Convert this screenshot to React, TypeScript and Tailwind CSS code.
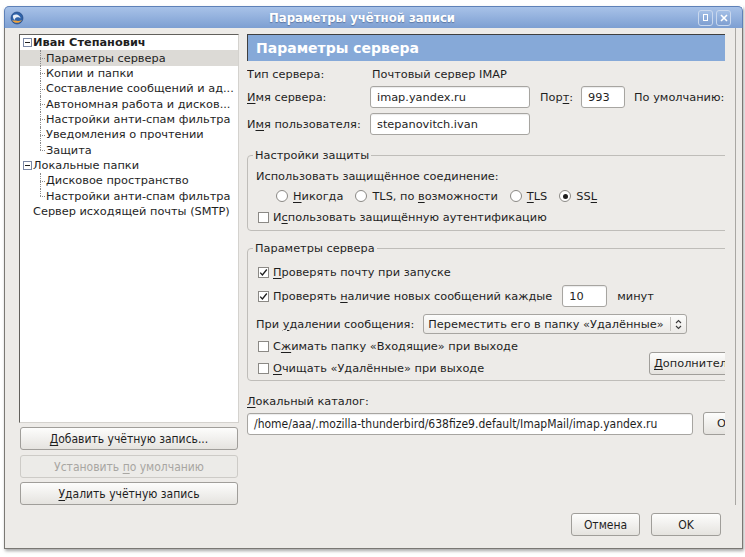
import React from "react";

const U: React.FC<{ children: React.ReactNode }> = ({ children }) => (
  <span className="underline decoration-1 underline-offset-[2px]">{children}</span>
);

const CheckBox: React.FC<{ checked?: boolean }> = ({ checked }) => (
  <span className="flex h-[11px] w-[11px] shrink-0 items-center justify-center border border-[#8b8985] bg-white">
    {checked && (
      <svg width="9" height="9" viewBox="0 0 9 9">
        <path d="M1.2 4.6 3.4 7 7.8 1.5" fill="none" stroke="#1e1e1e" strokeWidth="1.3" />
      </svg>
    )}
  </span>
);

const Radio: React.FC<{ checked?: boolean }> = ({ checked }) => (
  <span className="flex h-[12px] w-[12px] shrink-0 items-center justify-center rounded-full border border-[#8b8985] bg-white">
    {checked && <span className="h-[5px] w-[5px] rounded-full bg-[#1e1e1e]" />}
  </span>
);

const Field: React.FC<{ children: React.ReactNode; className?: string }> = ({ children, className }) => (
  <div
    className={`flex h-[22px] shrink-0 items-center whitespace-nowrap rounded-[3px] border border-[#a7a5a1] bg-white pl-[6px] shadow-[inset_0_1px_1px_rgba(0,0,0,0.08)] ${className ?? ""}`}
  >
    <span>{children}</span>
  </div>
);

const Button: React.FC<{ children: React.ReactNode; className?: string; disabled?: boolean }> = ({
  children,
  className,
  disabled,
}) => (
  <div
    className={`flex shrink-0 items-center justify-center whitespace-nowrap rounded-[3px] border ${
      disabled
        ? "border-[#cdcbc7] bg-[#ecebe8] text-[#a8a6a2]"
        : "border-[#a09e9a] bg-linear-to-b from-[#fdfdfc] to-[#e5e3df] text-[#1e1e1e]"
    } ${className ?? ""}`}
  >
    <span>{children}</span>
  </div>
);

const Expander = () => (
  <span className="flex h-[9px] w-[9px] shrink-0 items-center justify-center border border-[#7b88a6] bg-white">
    <span className="h-px w-[5px] bg-[#1e1e1e]" />
  </span>
);

const TreeParent: React.FC<{ label: string; bold?: boolean; leaf?: boolean }> = ({ label, bold, leaf }) => (
  <div className="flex h-[15.36px] items-center pl-[3px]">
    {leaf ? <span className="w-[9px]" /> : <Expander />}
    <span className={`ml-[1px] whitespace-nowrap ${bold ? "font-bold" : ""}`}>{label}</span>
  </div>
);

const TreeChild: React.FC<{ label: string; selected?: boolean; last?: boolean }> = ({ label, selected, last }) => (
  <div className={`relative flex h-[15.36px] items-center pl-[26px] ${selected ? "bg-[#dcdad6]" : ""}`}>
    <span
      className={`absolute left-[20px] top-0 border-l border-dotted border-[#8a8a8a] ${last ? "h-1/2" : "h-full"}`}
    />
    <span className="absolute left-[20px] top-1/2 w-[5px] border-t border-dotted border-[#8a8a8a]" />
    <span className="whitespace-nowrap">{label}</span>
  </div>
);

const ThunderbirdIcon = () => (
  <svg width="14" height="14" viewBox="0 0 14 14">
    <circle cx="7" cy="7" r="6" fill="#2f62a8" stroke="#1d3f7a" strokeWidth="0.6" />
    <path
      d="M3 4.5c1.5-1 3.5-1.2 5-.5 1.5.7 2.5 2 2.6 3.6-.8-1-2-1.5-3.2-1.3C5.8 6.5 4.6 7.7 4.5 9.3 3.5 8 2.6 6 3 4.5z"
      fill="#e8eef7"
    />
    <path
      d="M2 9.5c1.5 1.7 4 2.7 6.4 2.2 1.6-.4 2.8-1.4 3.4-2.7-1.4.9-3.2 1.2-4.9.8-1.8-.4-3.5-.5-4.9-.3z"
      fill="#f2a33a"
    />
  </svg>
);

const TitleButton: React.FC<{ children: React.ReactNode }> = ({ children }) => (
  <div className="flex h-[16px] w-[15px] items-center justify-center rounded-[3px] border border-[#c9d8ee] bg-linear-to-b from-[#a3bfe6] to-[#7f9fd1]">
    {children}
  </div>
);

export default function App() {
  return (
    <div className="h-[557px] w-[745px] overflow-hidden bg-white pl-[4px] pt-[6px] font-['DejaVu_Sans','Liberation_Sans',sans-serif] text-[11.33px] text-[#1e1e1e]">
      <div className="flex h-[543px] w-[739px] flex-col shadow-[1px_2px_3px_rgba(0,0,0,0.35)]">
        {/* title bar */}
        <div className="flex h-[22px] shrink-0 items-center rounded-t-[5px] border border-b-0 border-[#5e81b8] bg-linear-to-b from-[#a8c2e8] to-[#7d9fd2]">
          <div className="flex w-[21px] justify-center pl-[3px]">
            <ThunderbirdIcon />
          </div>
          <div className="flex-1 text-center font-['DejaVu_Sans_Condensed','DejaVu_Sans',sans-serif] text-[13px] font-bold text-white font-stretch-condensed [text-shadow:0_1px_1px_rgba(40,60,100,0.45)]">
            Параметры учётной записи
          </div>
          <div className="flex gap-[3px] pr-[11px]">
            <TitleButton>
              <span className="h-[7px] w-[5px] border border-white" />
            </TitleButton>
            <TitleButton>
              <svg width="8" height="8" viewBox="0 0 8 8">
                <path d="M1 1 7 7M7 1 1 7" stroke="#fff" strokeWidth="1.6" />
              </svg>
            </TitleButton>
          </div>
        </div>

        {/* body */}
        <div className="flex flex-1 flex-col border border-t-0 border-[#7a7874] bg-[#edebe8] pl-[14px] pt-[6px]">
          <div className="flex h-[471px]">
            {/* left column */}
            <div className="flex w-[220px] shrink-0 flex-col">
              <div className="h-[389px] border border-b-[#d4d2ce] border-l-[#62605c] border-r-[#d4d2ce] border-t-[#62605c] bg-white">
                <TreeParent label="Иван Степанович" bold />
                <TreeChild label="Параметры сервера" selected />
                <TreeChild label="Копии и папки" />
                <TreeChild label="Составление сообщений и ад..." />
                <TreeChild label="Автономная работа и дисков..." />
                <TreeChild label="Настройки анти-спам фильтра" />
                <TreeChild label="Уведомления о прочтении" />
                <TreeChild label="Защита" last />
                <TreeParent label="Локальные папки" />
                <TreeChild label="Дисковое пространство" />
                <TreeChild label="Настройки анти-спам фильтра" last />
                <TreeParent label="Сервер исходящей почты (SMTP)" leaf />
              </div>
              <div className="font-['DejaVu_Sans_Condensed','DejaVu_Sans',sans-serif] text-[12px] font-stretch-condensed">
                <Button className="ml-[1px] mt-[4px] h-[23px] w-[218px]">
                  <U>Д</U>обавить учётную запись...
                </Button>
                <Button className="ml-[1px] mt-[5px] h-[23px] w-[218px]" disabled>
                  Установить <U>п</U>о умолчанию
                </Button>
                <Button className="ml-[1px] mt-[4px] h-[23px] w-[218px]">
                  <U>У</U>далить учётную запись
                </Button>
              </div>
            </div>

            {/* right column */}
            <div className="ml-[8px] flex w-[478px] shrink-0 flex-col overflow-hidden">
              <div className="flex h-[27px] w-[500px] shrink-0 items-center border-l border-t border-[#3f3f3f] bg-[#86a9d8] pl-[8px] pt-[1px] text-[14px] font-bold text-white">
                Параметры сервера
              </div>

              <div className="mt-[2px] flex h-[22px] items-center whitespace-nowrap">
                <span className="w-[124px] shrink-0">Тип сервера:</span>
                <span className="ml-[1px]">Почтовый сервер IMAP</span>
              </div>
              <div className="mt-[1px] flex h-[22px] items-center whitespace-nowrap">
                <span className="w-[123px] shrink-0">
                  <U>И</U>мя сервера:
                </span>
                <Field className="w-[160px]">imap.yandex.ru</Field>
                <span className="ml-[10px]">
                  Пор<U>т</U>:
                </span>
                <Field className="ml-[8px] w-[44px]">993</Field>
                <span className="ml-[9px]">По умолчанию:</span>
              </div>
              <div className="mt-[5px] flex h-[22px] items-center whitespace-nowrap">
                <span className="w-[123px] shrink-0">
                  И<U>м</U>я пользователя:
                </span>
                <Field className="w-[160px]">stepanovitch.ivan</Field>
              </div>

              {/* security */}
              <fieldset className="mt-[13px] w-[500px] shrink-0 rounded-[4px] border border-[#bfbdb9] pb-[5px] pl-[8px]">
                <legend className="ml-[-3px] px-[2px] leading-[14px]">Настройки защиты</legend>
                <div className="mt-[6px] flex h-[16px] items-center">Использовать защищённое соединение:</div>
                <div className="mt-[4px] flex h-[16px] items-center pl-[20px] whitespace-nowrap">
                  <Radio />
                  <span className="ml-[5px]">
                    <U>Н</U>икогда
                  </span>
                  <span className="ml-[12px]">
                    <Radio />
                  </span>
                  <span className="ml-[5px]">
                    TLS, по <U>в</U>озможности
                  </span>
                  <span className="ml-[12px]">
                    <Radio />
                  </span>
                  <span className="ml-[5px]">
                    <U>T</U>LS
                  </span>
                  <span className="ml-[12px]">
                    <Radio checked />
                  </span>
                  <span className="ml-[5px]">
                    SS<U>L</U>
                  </span>
                </div>
                <div className="mt-[5px] flex h-[16px] items-center pl-[2px] whitespace-nowrap">
                  <CheckBox />
                  <span className="ml-[4px]">
                    И<U>с</U>пользовать защищённую аутентификацию
                  </span>
                </div>
              </fieldset>

              {/* server params */}
              <fieldset className="mt-[10px] w-[500px] shrink-0 rounded-[4px] border border-[#bfbdb9] pb-[4px] pl-[8px]">
                <legend className="ml-[-3px] px-[2px] leading-[14px]">Параметры сервера</legend>
                <div className="mt-[9px] flex h-[16px] items-center pl-[2px] whitespace-nowrap">
                  <CheckBox checked />
                  <span className="ml-[4px]">
                    <U>П</U>роверять почту при запуске
                  </span>
                </div>
                <div className="mt-[5px] flex h-[22px] items-center pl-[2px] whitespace-nowrap">
                  <CheckBox checked />
                  <span className="ml-[4px]">
                    Проверять <U>н</U>аличие новых сообщений каждые
                  </span>
                  <Field className="ml-[10px] w-[45px]">10</Field>
                  <span className="ml-[10px]">минут</span>
                </div>
                <div className="mt-[7px] flex h-[20px] items-center whitespace-nowrap">
                  <span>
                    При <U>у</U>далении сообщения:
                  </span>
                  <div className="ml-[9px] flex h-[20px] w-[264px] items-center rounded-[3px] border border-[#a7a5a1] bg-linear-to-b from-[#fcfcfb] to-[#ebe9e6]">
                    <span className="flex-1 pl-[4px]">Переместить его в папку «Удалённые»</span>
                    <span className="h-[14px] w-px bg-[#c4c2be]" />
                    <span className="flex w-[15px] justify-center">
                      <svg width="7" height="11" viewBox="0 0 7 11">
                        <path d="M1 4 3.5 1.5 6 4M1 7 3.5 9.5 6 7" fill="none" stroke="#3a3a3a" strokeWidth="1.1" />
                      </svg>
                    </span>
                  </div>
                </div>
                <div className="flex items-end">
                  <div className="w-[393px] shrink-0">
                    <div className="mt-[4px] flex h-[16px] items-center pl-[2px] whitespace-nowrap">
                      <CheckBox />
                      <span className="ml-[4px]">
                        С<U>ж</U>имать папку «Входящие» при выходе
                      </span>
                    </div>
                    <div className="mt-[6px] flex h-[16px] items-center pl-[2px] whitespace-nowrap">
                      <CheckBox />
                      <span className="ml-[4px]">
                        <U>О</U>чищать «Удалённые» при выходе
                      </span>
                    </div>
                  </div>
                  <Button className="mb-[1px] h-[23px] w-[120px] justify-start pl-[4px]">
                    <U>Д</U>ополнительно...
                  </Button>
                </div>
              </fieldset>

              <div className="mt-[12px] flex h-[16px] items-center">
                <span>
                  <U>Л</U>окальный каталог:
                </span>
              </div>
              <div className="mt-[3px] flex items-center">
                <Field className="w-[446px] font-['DejaVu_Sans_Condensed','DejaVu_Sans',sans-serif] text-[12px] font-stretch-condensed">
                  /home/aaa/.mozilla-thunderbird/638fize9.default/ImapMail/imap.yandex.ru
                </Field>
                <Button className="ml-[10px] h-[23px] w-[80px] justify-start pl-[13px]">Обзор...</Button>
              </div>
            </div>

            <div className="ml-[10px] -mt-[6px] w-px shrink-0 bg-[#a9a7a3]" />
          </div>

          {/* dialog buttons */}
          <div className="mt-[8px] flex justify-end gap-[11px] pr-[21px] font-['DejaVu_Sans_Condensed','DejaVu_Sans',sans-serif] text-[12px] font-stretch-condensed">
            <Button className="h-[23px] w-[69px]">Отмена</Button>
            <Button className="h-[23px] w-[70px]">OK</Button>
          </div>
        </div>
      </div>
    </div>
  );
}
